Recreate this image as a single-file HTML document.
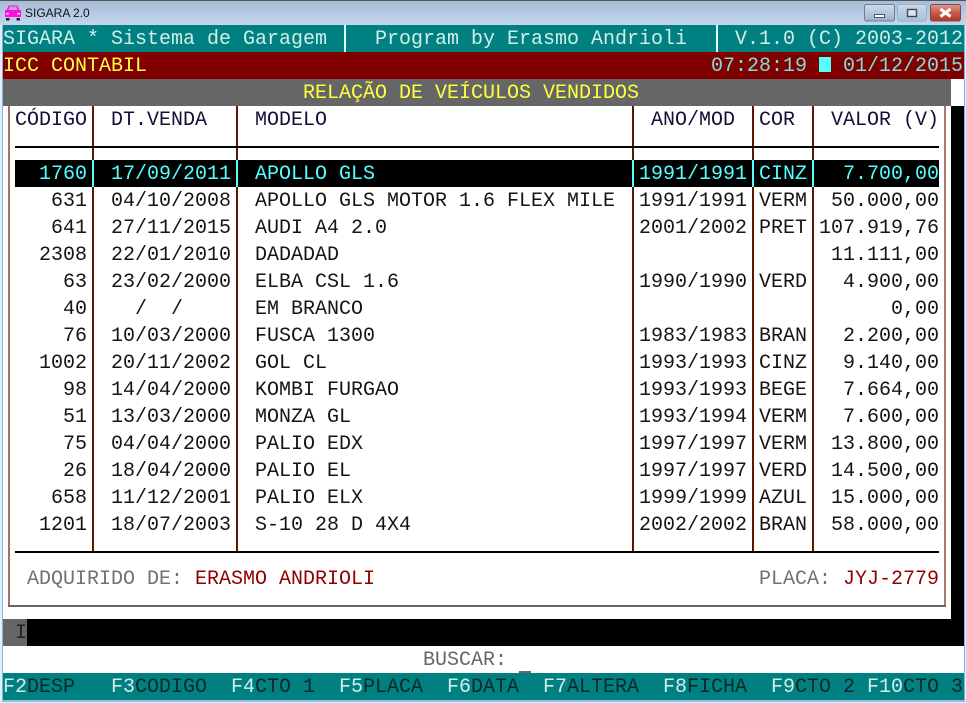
<!DOCTYPE html>
<html><head><meta charset="utf-8"><style>
html,body{margin:0;padding:0;background:#fff}
#w{position:relative;width:966px;height:703px;overflow:hidden;background:#fff;font:20px/29px "Liberation Mono",monospace;color:#181410}
#w div,#w i,#w span{position:absolute;font-style:normal;white-space:pre}
.r{left:0;width:966px;height:27px}
.a{right:879px}.b{left:111px}.c{left:255px}.d{left:639px}.e{left:759px}.f{right:27px}
.v{top:106px;width:2px;height:446px;background:#5a1a00}
.h{top:160px;width:2px;height:27px;background:#55ffff}
#w .k{position:static;color:#cfeee8}
</style></head><body><div id="w">
<div style="left:0;top:0;width:966px;height:25px;background:linear-gradient(#a8bcd6,#c2d6ee);border-top:1px solid #555;box-sizing:border-box"></div>
<div style="left:0;top:25px;width:3px;height:678px;background:#e4eef8"></div>
<div style="left:2px;top:25px;width:1px;height:676px;background:#7fb4e4"></div>
<div style="left:964px;top:25px;width:2px;height:678px;background:#e4eef8"></div>
<div style="left:964px;top:25px;width:1px;height:676px;background:#7fb4e4"></div>
<div style="left:0;top:700px;width:966px;height:3px;background:#e4eef8"></div>
<div style="left:2px;top:700px;width:963px;height:2px;background:#8cc0ec"></div>
<svg style="position:absolute;left:4px;top:4px" width="18" height="18" viewBox="0 0 18 18"><path d="M4.5 1.5h9l1.5 4 2 1v6.500H1V6.500l2-1z" fill="#ff10e0"/><path d="M5.500 2.500h7l1 3.500h-9z" fill="#c8a0d8"/><path d="M2 9h3v1.500H2zM13 9h3v1.500h-3z" fill="#ffd0f4"/><path d="M2 14h3.500v2.500H2zM12.500 14H16v2.500h-3.500z" fill="#222"/></svg>
<span style="left:25px;top:6px;font:12px/14px 'Liberation Sans',sans-serif;color:#111">SIGARA 2.0</span>
<svg style="position:absolute;left:864px;top:4px" width="97" height="18" viewBox="0 0 97 18">
<defs><linearGradient id="g" x1="0" y1="0" x2="0" y2="1"><stop offset="0" stop-color="#d0dcea"/><stop offset="1" stop-color="#9cb2cc"/></linearGradient><linearGradient id="m" x1="0" y1="0" x2="0" y2="1"><stop offset="0" stop-color="#c8d8ea"/><stop offset="1" stop-color="#a8c0dc"/></linearGradient><linearGradient id="h" x1="0" y1="0" x2="0" y2="1"><stop offset="0" stop-color="#dc9a8c"/><stop offset=".5" stop-color="#c85a48"/><stop offset="1" stop-color="#b03828"/></linearGradient></defs>
<rect x=".5" y=".5" width="30" height="16.500" rx="2" fill="url(#g)" stroke="#6f7f94"/>
<rect x="33.500" y=".5" width="29" height="16.500" rx="2" fill="url(#m)" stroke="#9fb2c8"/>
<rect x="66.500" y=".5" width="30" height="16.500" rx="2" fill="url(#h)" stroke="#7a4a48"/>
<rect x="10.500" y="10.500" width="10" height="3" fill="#fff" stroke="#556"/>
<rect x="43.500" y="5.500" width="9" height="7" fill="#dde6f0" stroke="#445" stroke-width="1.400"/>
<path d="M76.500 5l10 7.500M86.500 5l-10 7.500" stroke="#fff" stroke-width="3"/>
</svg>

<div class="r" style="left:3px;width:961px;top:25px;background:#008080;color:#cfeee8">SIGARA * Sistema de Garagem<i style="left:372px">Program by Erasmo Andrioli</i><i style="left:732px">V.1.0 (C) 2003-2012</i></div>
<div style="left:344px;top:25px;width:2px;height:27px;background:#dff"></div>
<div style="left:716px;top:25px;width:2px;height:27px;background:#dff"></div>
<div class="r" style="left:3px;width:961px;top:52px;background:#800000;color:#ffff40">ICC CONTABIL<i style="left:708px;color:#7fdcdc">07:28:19</i><i style="left:816px;top:5px;width:12px;height:15px;background:#55ffff"></i><i style="left:840px;color:#7fdcdc">01/12/2015</i></div>
<div class="r" style="left:3px;width:948px;top:79px;background:#666;color:#ffff40"><i style="left:300px">RELAÇÃO DE VEÍCULOS VENDIDOS</i></div>
<div style="left:951px;top:106px;width:13px;height:513px;background:#000"></div>
<div style="left:8px;top:106px;width:2px;height:500px;background:#a87060"></div>
<div style="left:944px;top:106px;width:2px;height:500px;background:#a87a70"></div>
<div style="left:8px;top:605px;width:938px;height:2px;background:#666"></div>

<div class="v" style="left:92px"></div><div class="v" style="left:236px"></div><div class="v" style="left:632px"></div><div class="v" style="left:752px"></div><div class="v" style="left:812px"></div>
<div style="left:15px;top:146px;width:924px;height:2px;background:#000"></div>
<div style="left:15px;top:551px;width:924px;height:2px;background:#000"></div>

<div class="r" style="top:106px;color:#101038"><i style="left:15px">CÓDIGO</i><i class="b">DT.VENDA</i><i class="c">MODELO</i><i style="left:651px">ANO/MOD</i><i class="e">COR</i><i style="left:831px">VALOR (V)</i></div>

<div style="left:15px;top:160px;width:924px;height:27px;background:#000"></div>
<div class="h" style="left:92px"></div><div class="h" style="left:236px"></div><div class="h" style="left:632px"></div><div class="h" style="left:752px"></div><div class="h" style="left:812px"></div>
<div class="r" style="top:160px;color:#55ffff"><i class="a">1760</i><i class="b">17/09/2011</i><i class="c">APOLLO GLS</i><i class="d">1991/1991</i><i class="e">CINZ</i><i class="f">7.700,00</i></div>
<div class="r" style="top:187px"><i class="a">631</i><i class="b">04/10/2008</i><i class="c">APOLLO GLS MOTOR 1.6 FLEX MILE</i><i class="d">1991/1991</i><i class="e">VERM</i><i class="f">50.000,00</i></div>
<div class="r" style="top:214px"><i class="a">641</i><i class="b">27/11/2015</i><i class="c">AUDI A4 2.0</i><i class="d">2001/2002</i><i class="e">PRET</i><i class="f">107.919,76</i></div>
<div class="r" style="top:241px"><i class="a">2308</i><i class="b">22/01/2010</i><i class="c">DADADAD</i><i class="f">11.111,00</i></div>
<div class="r" style="top:268px"><i class="a">63</i><i class="b">23/02/2000</i><i class="c">ELBA CSL 1.6</i><i class="d">1990/1990</i><i class="e">VERD</i><i class="f">4.900,00</i></div>
<div class="r" style="top:295px"><i class="a">40</i><i class="b">  /  /</i><i class="c">EM BRANCO</i><i class="f">0,00</i></div>
<div class="r" style="top:322px"><i class="a">76</i><i class="b">10/03/2000</i><i class="c">FUSCA 1300</i><i class="d">1983/1983</i><i class="e">BRAN</i><i class="f">2.200,00</i></div>
<div class="r" style="top:349px"><i class="a">1002</i><i class="b">20/11/2002</i><i class="c">GOL CL</i><i class="d">1993/1993</i><i class="e">CINZ</i><i class="f">9.140,00</i></div>
<div class="r" style="top:376px"><i class="a">98</i><i class="b">14/04/2000</i><i class="c">KOMBI FURGAO</i><i class="d">1993/1993</i><i class="e">BEGE</i><i class="f">7.664,00</i></div>
<div class="r" style="top:403px"><i class="a">51</i><i class="b">13/03/2000</i><i class="c">MONZA GL</i><i class="d">1993/1994</i><i class="e">VERM</i><i class="f">7.600,00</i></div>
<div class="r" style="top:430px"><i class="a">75</i><i class="b">04/04/2000</i><i class="c">PALIO EDX</i><i class="d">1997/1997</i><i class="e">VERM</i><i class="f">13.800,00</i></div>
<div class="r" style="top:457px"><i class="a">26</i><i class="b">18/04/2000</i><i class="c">PALIO EL</i><i class="d">1997/1997</i><i class="e">VERD</i><i class="f">14.500,00</i></div>
<div class="r" style="top:484px"><i class="a">658</i><i class="b">11/12/2001</i><i class="c">PALIO ELX</i><i class="d">1999/1999</i><i class="e">AZUL</i><i class="f">15.000,00</i></div>
<div class="r" style="top:511px"><i class="a">1201</i><i class="b">18/07/2003</i><i class="c">S-10 28 D 4X4</i><i class="d">2002/2002</i><i class="e">BRAN</i><i class="f">58.000,00</i></div>

<div class="r" style="top:565px;color:#707078"><i style="left:27px">ADQUIRIDO DE:</i><i style="left:195px;color:#900000">ERASMO ANDRIOLI</i><i style="left:759px">PLACA:</i><i style="left:843px;color:#900000">JYJ-2779</i></div>

<div style="left:3px;top:619px;width:961px;height:27px;background:#000"></div>
<div class="r" style="left:3px;width:24px;top:619px;background:#666;color:#222"><i style="left:12px">I</i></div>
<div class="r" style="top:646px;color:#666"><i style="left:423px">BUSCAR:</i></div>

<div class="r" style="left:3px;width:961px;top:673px;background:#008080;color:#062a2a"><i style="left:0"><span class="k">F2</span>DESP</i><i style="left:108px"><span class="k">F3</span>CODIGO</i><i style="left:228px"><span class="k">F4</span>CTO 1</i><i style="left:336px"><span class="k">F5</span>PLACA</i><i style="left:444px"><span class="k">F6</span>DATA</i><i style="left:540px"><span class="k">F7</span>ALTERA</i><i style="left:660px"><span class="k">F8</span>FICHA</i><i style="left:768px"><span class="k">F9</span>CTO 2</i><i style="left:864px"><span class="k">F10</span>CTO 3</i></div>
<div style="left:519px;top:671px;width:12px;height:2px;background:#666"></div>
</div></body></html>
